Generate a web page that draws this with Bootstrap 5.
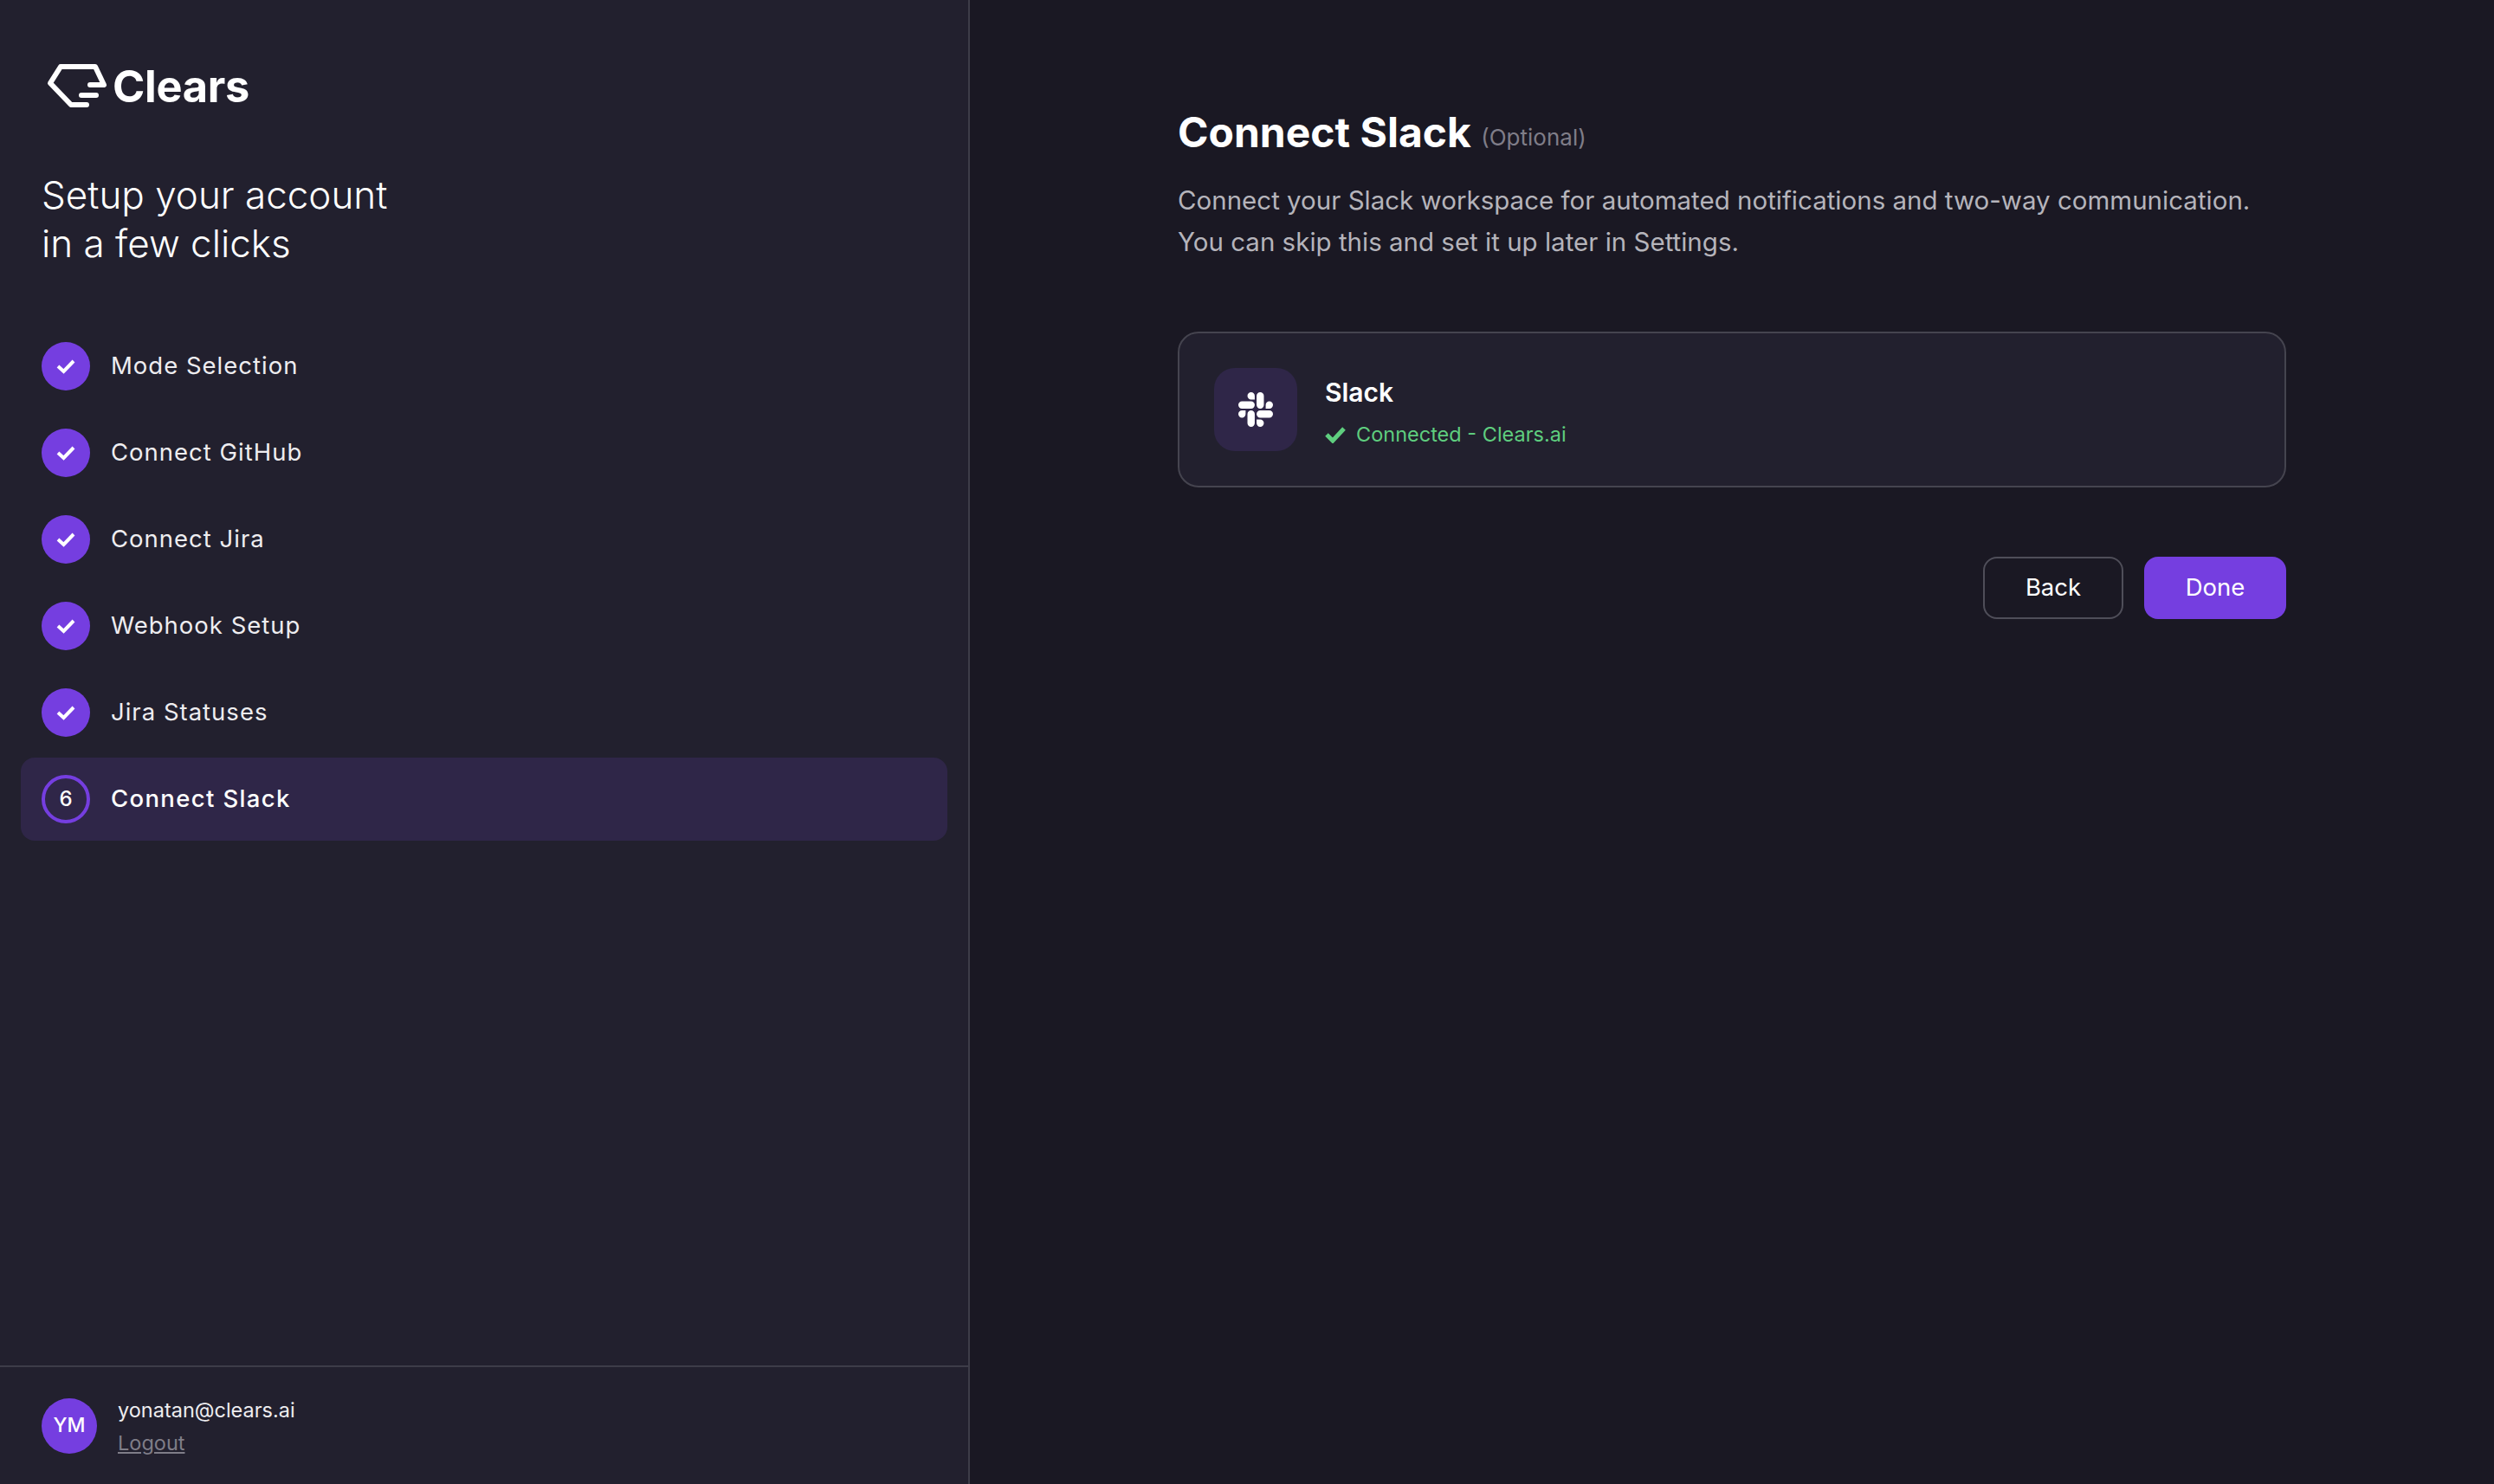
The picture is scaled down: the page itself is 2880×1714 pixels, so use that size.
<!DOCTYPE html>
<html lang="en">
<head>
  <meta charset="UTF-8" />
  <title>Clears - Connect Slack</title>
  <link href="https://cdn.jsdelivr.net/npm/bootstrap@5.3.0/dist/css/bootstrap.min.css" rel="stylesheet" />
  <style>
    body { background: #1a1823; color: #fff; font-family: "Inter", "Liberation Sans", sans-serif; }
    .sidebar { width: 1120px; background: #22202e; border-right: 2px solid #3d3c48; }
    .logo { padding: 72px 48px 0 52px; height: 128px; gap: 6px; }
    .logo span { font-size: 50.5px; font-weight: 700; line-height: 56px; letter-spacing: -0.3px; }
    .tagline { margin: 69px 48px 0; font-size: 44px; font-weight: 300; line-height: 56px; }
    .steps { margin: 66px 24px 0 24px; gap: 4px; }
    .step { height: 96px; padding: 0 24px; gap: 24px; font-size: 27.5px; letter-spacing: 1px; color: #eeedf0; }
    .step.active { background: #2f2648; border-radius: 16px; color: #fff; font-weight: 500; letter-spacing: 1.35px; }
    .step-dot { width: 56px; height: 56px; background: #753ee0; font-size: 24px; font-weight: 500; letter-spacing: 0; }
    .step.active .step-dot { background: transparent; border: 4px solid #753ee0; }
    .account { border-top: 2px solid #3d3c48; height: 137px; padding: 0 48px; gap: 24px; }
    .avatar { width: 64px; height: 64px; background: #753ee0; font-size: 23px; font-weight: 500; }
    .email { font-size: 23.5px; line-height: 39px; padding-top: 1px; color: #eeedf0; }
    .logout { font-size: 23.5px; line-height: 38px; color: #7f7d88; }
    .content { width: 1280px; margin-left: 240px; padding-top: 124px; }
    .content h1 { font-size: 48px; font-weight: 700; line-height: 58px; margin: 0; }
    .content h1 small { font-size: 26px; font-weight: 400; color: #7f7d88; vertical-align: 2px; }
    .lead-text { font-size: 29.5px; line-height: 48px; color: #b5b4bb; margin: 19px 0 0; font-weight: 400; }
    .slack-card { margin-top: 80px; background: #22202e; border: 2px solid #45444f; border-radius: 24px; height: 180px; padding: 0 40px; gap: 32px; }
    .slack-icon { width: 96px; height: 96px; background: #2f2648; border-radius: 24px; }
    .slack-info { padding-top: 6px; }
    .slack-name { font-size: 30px; font-weight: 600; line-height: 40px; }
    .slack-status { font-size: 23.5px; line-height: 36px; color: #5fce7f; gap: 12px; margin-top: 11px; }
    .actions { margin-top: 80px; gap: 24px; }
    .btn-back, .btn-done { height: 72px; border-radius: 16px; font-size: 27.5px; color: #fff; padding: 0; }
    .btn-back { width: 162px; border: 2px solid #4f4e59; background: transparent; }
    .btn-done { width: 164px; border: 0; background: #753ee0; }
  </style>
</head>
<body>
<div class="d-flex vh-100 overflow-hidden">

  <aside class="sidebar d-flex flex-column flex-shrink-0">
    <div class="logo d-flex align-items-start">
      <svg width="72" height="56" viewBox="0 0 72 56" fill="none" stroke="#fff" stroke-width="6" stroke-linecap="round" stroke-linejoin="round">
        <polyline points="48,49 30,49 6,24 18,5 58,5 68,26 52,26" />
        <line x1="42" y1="38" x2="59" y2="38" />
      </svg>
      <span>Clears</span>
    </div>
    <div class="tagline">Setup your account<br />in a few clicks</div>

    <div class="steps d-flex flex-column">
      <div class="step d-flex align-items-center">
        <span class="step-dot rounded-circle d-flex align-items-center justify-content-center"><svg width="24" height="24" viewBox="0 0 24 24" fill="none" stroke="#fff" stroke-width="4"><polyline points="3,12 9.5,18 21,6" /></svg></span>
        Mode Selection
      </div>
      <div class="step d-flex align-items-center">
        <span class="step-dot rounded-circle d-flex align-items-center justify-content-center"><svg width="24" height="24" viewBox="0 0 24 24" fill="none" stroke="#fff" stroke-width="4"><polyline points="3,12 9.5,18 21,6" /></svg></span>
        Connect GitHub
      </div>
      <div class="step d-flex align-items-center">
        <span class="step-dot rounded-circle d-flex align-items-center justify-content-center"><svg width="24" height="24" viewBox="0 0 24 24" fill="none" stroke="#fff" stroke-width="4"><polyline points="3,12 9.5,18 21,6" /></svg></span>
        Connect Jira
      </div>
      <div class="step d-flex align-items-center">
        <span class="step-dot rounded-circle d-flex align-items-center justify-content-center"><svg width="24" height="24" viewBox="0 0 24 24" fill="none" stroke="#fff" stroke-width="4"><polyline points="3,12 9.5,18 21,6" /></svg></span>
        Webhook Setup
      </div>
      <div class="step d-flex align-items-center">
        <span class="step-dot rounded-circle d-flex align-items-center justify-content-center"><svg width="24" height="24" viewBox="0 0 24 24" fill="none" stroke="#fff" stroke-width="4"><polyline points="3,12 9.5,18 21,6" /></svg></span>
        Jira Statuses
      </div>
      <div class="step active d-flex align-items-center">
        <span class="step-dot rounded-circle d-flex align-items-center justify-content-center">6</span>
        Connect Slack
      </div>
    </div>

    <div class="account d-flex align-items-center mt-auto">
      <span class="avatar rounded-circle d-flex align-items-center justify-content-center">YM</span>
      <div>
        <div class="email">yonatan@clears.ai</div>
        <a href="#" class="logout d-block">Logout</a>
      </div>
    </div>
  </aside>

  <main class="content">
    <h1>Connect Slack <small>(Optional)</small></h1>
    <p class="lead-text">Connect your Slack workspace for automated notifications and two-way communication.<br />You can skip this and set it up later in Settings.</p>

    <div class="slack-card d-flex align-items-center">
      <div class="slack-icon d-flex align-items-center justify-content-center">
        <svg width="40" height="40" viewBox="0 0 24 24" fill="#fff"><path d="M5.042 15.165a2.528 2.528 0 0 1-2.52 2.523A2.528 2.528 0 0 1 0 15.165a2.527 2.527 0 0 1 2.522-2.52h2.52v2.52zM6.313 15.165a2.527 2.527 0 0 1 2.521-2.52 2.527 2.527 0 0 1 2.521 2.52v6.313A2.528 2.528 0 0 1 8.834 24a2.528 2.528 0 0 1-2.521-2.522v-6.313zM8.834 5.042a2.528 2.528 0 0 1-2.521-2.52A2.528 2.528 0 0 1 8.834 0a2.528 2.528 0 0 1 2.521 2.522v2.52H8.834zM8.834 6.313a2.528 2.528 0 0 1 2.521 2.521 2.528 2.528 0 0 1-2.521 2.521H2.522A2.528 2.528 0 0 1 0 8.834a2.528 2.528 0 0 1 2.522-2.521h6.312zM18.956 8.834a2.528 2.528 0 0 1 2.522-2.521A2.528 2.528 0 0 1 24 8.834a2.528 2.528 0 0 1-2.522 2.521h-2.522V8.834zM17.688 8.834a2.528 2.528 0 0 1-2.523 2.521 2.527 2.527 0 0 1-2.52-2.521V2.522A2.527 2.527 0 0 1 15.165 0a2.528 2.528 0 0 1 2.523 2.522v6.312zM15.165 18.956a2.528 2.528 0 0 1 2.523 2.522A2.528 2.528 0 0 1 15.165 24a2.527 2.527 0 0 1-2.52-2.522v-2.522h2.52zM15.165 17.688a2.527 2.527 0 0 1-2.52-2.523 2.526 2.526 0 0 1 2.52-2.52h6.313A2.527 2.527 0 0 1 24 15.165a2.528 2.528 0 0 1-2.522 2.523h-6.313z" /></svg>
      </div>
      <div class="slack-info">
        <div class="slack-name">Slack</div>
        <div class="slack-status d-flex align-items-center">
          <svg width="24" height="20" viewBox="0 0 24 20" fill="none" stroke="#5fce7f" stroke-width="5"><polyline points="2,10 9,17 22,3" /></svg>
          Connected - Clears.ai
        </div>
      </div>
    </div>

    <div class="actions d-flex justify-content-end">
      <button type="button" class="btn btn-back">Back</button>
      <button type="button" class="btn btn-done">Done</button>
    </div>
  </main>

</div>
<script src="https://cdn.jsdelivr.net/npm/bootstrap@5.3.0/dist/js/bootstrap.bundle.min.js"></script>
</body>
</html>
